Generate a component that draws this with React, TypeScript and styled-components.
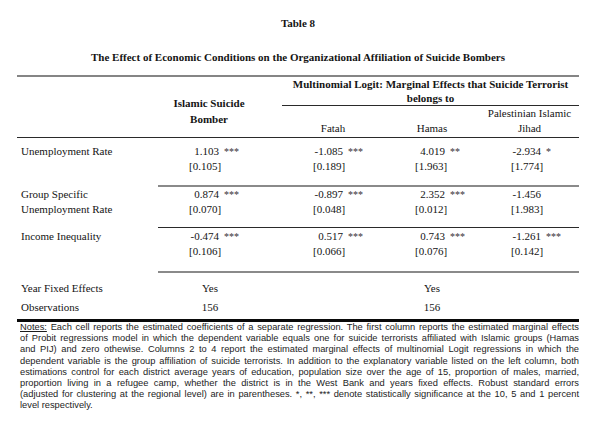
import * as React from "react";
import styled, { createGlobalStyle } from "styled-components";

const GlobalStyle = createGlobalStyle`
  body {
    margin: 0;
    background: #fff;
    color: #141414;
    font-family: "Liberation Serif", "Times New Roman", serif;
  }
`;

const Page = styled.div`
  width: 562px;
  padding: 16px 0 0 17px;
`;

const Caption = styled.div`
  text-align: center;
  font-weight: bold;
  font-size: 11px;
  line-height: 15px;

  .num {
    margin-bottom: 19px;
  }
  .title {
    margin-bottom: 10px;
  }
`;

const Table = styled.table`
  border-collapse: separate;
  border-spacing: 0;
  table-layout: fixed;
  width: 562px;
  border-top: 2px solid #858585;
  font-size: 11px;
  line-height: 15px;
`;

const HeadCell = styled.th<{ $align?: "top" | "bottom"; $bold?: boolean; $line?: number; $pb?: number; $pr?: number; $rule?: boolean }>`
  padding: 0 ${(p) => p.$pr ?? 0}px ${(p) => p.$pb ?? 0}px 0;
  text-align: center;
  vertical-align: ${(p) => p.$align ?? "bottom"};
  font-weight: ${(p) => (p.$bold ? "bold" : "normal")};
  line-height: ${(p) => p.$line ?? 15}px;
  border-bottom: ${(p) => (p.$rule ? "1px solid #2a2a2a" : "none")};
  white-space: nowrap;
`;

type Rule = "none" | "thin" | "gray" | "heavy";

const ruleCss: Record<Rule, string> = {
  none: "none",
  thin: "1px solid #2a2a2a",
  gray: "2px solid #8a8a8a",
  heavy: "3px solid #0a0a0a",
};

const Cell = styled.td<{ $pt: number; $pb: number; $rule: Rule; $label?: boolean; $center?: boolean; $pr?: number }>`
  padding: ${(p) => p.$pt}px ${(p) => p.$pr ?? 0}px ${(p) => p.$pb}px ${(p) => (p.$label ? 4 : p.$center ? 0 : 31)}px;
  vertical-align: top;
  text-align: ${(p) => (p.$center ? "center" : "left")};
  border-bottom: ${(p) => ruleCss[p.$rule]};
  white-space: nowrap;
`;

const Coef = styled.span`
  display: inline-block;
  width: 30px;
  text-align: right;
`;

const Stars = styled.span`
  margin-left: 5px;
  font-size: 10px;
  color: #333;
`;

const Notes = styled.div`
  padding: 0 0 0 3px;
  width: 559px;
  font-family: "Liberation Sans", Arial, sans-serif;
  font-size: 9.3px;
  line-height: 11.2px;
  color: #1c1c1c;

  u {
    text-decoration: underline;
  }
`;

const NoteLine = styled.div<{ $last?: boolean }>`
  white-space: nowrap;
  text-align: justify;
  text-align-last: ${(p) => (p.$last ? "left" : "justify")};
`;

interface Estimate {
  coef: string;
  stars?: string;
  se: string;
}

interface DataRow {
  label: string[];
  cells: Estimate[];
  pt: number;
  pb: number;
  rule: Rule;
}

const rows: DataRow[] = [
  {
    label: ["Unemployment Rate"],
    cells: [
      { coef: "1.103", stars: "***", se: "[0.105]" },
      { coef: "-1.085", stars: "***", se: "[0.189]" },
      { coef: "4.019", stars: "**", se: "[1.963]" },
      { coef: "-2.934", stars: "*", se: "[1.774]" },
    ],
    pt: 6,
    pb: 11,
    rule: "gray",
  },
  {
    label: ["Group Specific", "Unemployment Rate"],
    cells: [
      { coef: "0.874", stars: "***", se: "[0.070]" },
      { coef: "-0.897", stars: "***", se: "[0.048]" },
      { coef: "2.352", stars: "***", se: "[0.012]" },
      { coef: "-1.456", se: "[1.983]" },
    ],
    pt: 0,
    pb: 10,
    rule: "thin",
  },
  {
    label: ["Income Inequality"],
    cells: [
      { coef: "-0.474", stars: "***", se: "[0.106]" },
      { coef: "0.517", stars: "***", se: "[0.066]" },
      { coef: "0.743", stars: "***", se: "[0.076]" },
      { coef: "-1.261", stars: "***", se: "[0.142]" },
    ],
    pt: 1,
    pb: 12,
    rule: "gray",
  },
];

const notes = [
  "of Probit regressions model in which the dependent variable equals one for suicide terrorists affiliated with Islamic groups (Hamas",
  "and PIJ) and zero othewise. Columns 2 to 4 report the estimated marginal effects of multinomial Logit regressions in which the",
  "dependent variable is the group affiliation of suicide terrorists. In addition to the explanatory variable listed on the left column, both",
  "estimations control for each district average years of education, population size over the age of 15, proportion of males, married,",
  "proportion living in a refugee camp, whether the district is in the West Bank and years fixed effects.  Robust standard errors",
  "(adjusted for clustering at the regional level) are in parentheses. *, **, *** denote statistically significance at the 10, 5 and 1 percent",
];

const EstimateCell: React.FC<{ e: Estimate; row: DataRow }> = ({ e, row }) => (
  <Cell $pt={row.pt} $pb={row.pb} $rule={row.rule}>
    <div>
      <Coef>{e.coef}</Coef>
      {e.stars && <Stars>{e.stars}</Stars>}
    </div>
    <div>{e.se}</div>
  </Cell>
);

export default function App() {
  return (
    <Page>
      <GlobalStyle />
      <Caption>
        <div className="num">Table 8</div>
        <div className="title">
          The Effect of Economic Conditions on the Organizational Affiliation of Suicide Bombers
        </div>
      </Caption>
      <Table>
        <colgroup>
          <col style={{ width: 141 }} />
          <col style={{ width: 124 }} />
          <col style={{ width: 102 }} />
          <col style={{ width: 96 }} />
          <col style={{ width: 99 }} />
        </colgroup>
        <thead>
          <tr>
            <HeadCell rowSpan={2} $rule />
            <HeadCell rowSpan={2} $rule $bold $line={16} $pb={10} $pr={22}>
              Islamic Suicide
              <br />
              Bomber
            </HeadCell>
            <HeadCell colSpan={3} $rule $bold $align="top" $line={14}>
              Multinomial Logit: Marginal Effects that Suicide Terrorist
              <br />
              belongs to
            </HeadCell>
          </tr>
          <tr>
            <HeadCell $rule $pb={1}>Fatah</HeadCell>
            <HeadCell $rule $pb={1}>Hamas</HeadCell>
            <HeadCell $rule $pb={1}>
              Palestinian Islamic
              <br />
              Jihad
            </HeadCell>
          </tr>
        </thead>
        <tbody>
          {rows.map((row) => (
            <tr key={row.label.join(" ")}>
              <Cell $label $pt={row.pt} $pb={row.pb} $rule="none">
                {row.label.map((l) => (
                  <div key={l}>{l}</div>
                ))}
              </Cell>
              {row.cells.map((e, i) => (
                <EstimateCell key={i} e={e} row={row} />
              ))}
            </tr>
          ))}
          <tr>
            <Cell $label $pt={8} $pb={4} $rule="none">Year Fixed Effects</Cell>
            <Cell $center $pr={20} $pt={8} $pb={4} $rule="none">Yes</Cell>
            <Cell $center $pt={8} $pb={4} $rule="none" />
            <Cell $center $pt={8} $pb={4} $rule="none">Yes</Cell>
            <Cell $center $pt={8} $pb={4} $rule="none" />
          </tr>
          <tr>
            <Cell $label $pt={0} $pb={4} $rule="heavy">Observations</Cell>
            <Cell $center $pr={20} $pt={0} $pb={4} $rule="heavy">156</Cell>
            <Cell $center $pt={0} $pb={4} $rule="heavy" />
            <Cell $center $pt={0} $pb={4} $rule="heavy">156</Cell>
            <Cell $center $pt={0} $pb={4} $rule="heavy" />
          </tr>
        </tbody>
      </Table>
      <Notes>
        <NoteLine>
          <u>Notes:</u> Each cell reports the estimated coefficients of a separate regression. The first column reports the estimated marginal effects
        </NoteLine>
        {notes.map((n) => (
          <NoteLine key={n}>{n}</NoteLine>
        ))}
        <NoteLine $last>level respectively.</NoteLine>
      </Notes>
    </Page>
  );
}
